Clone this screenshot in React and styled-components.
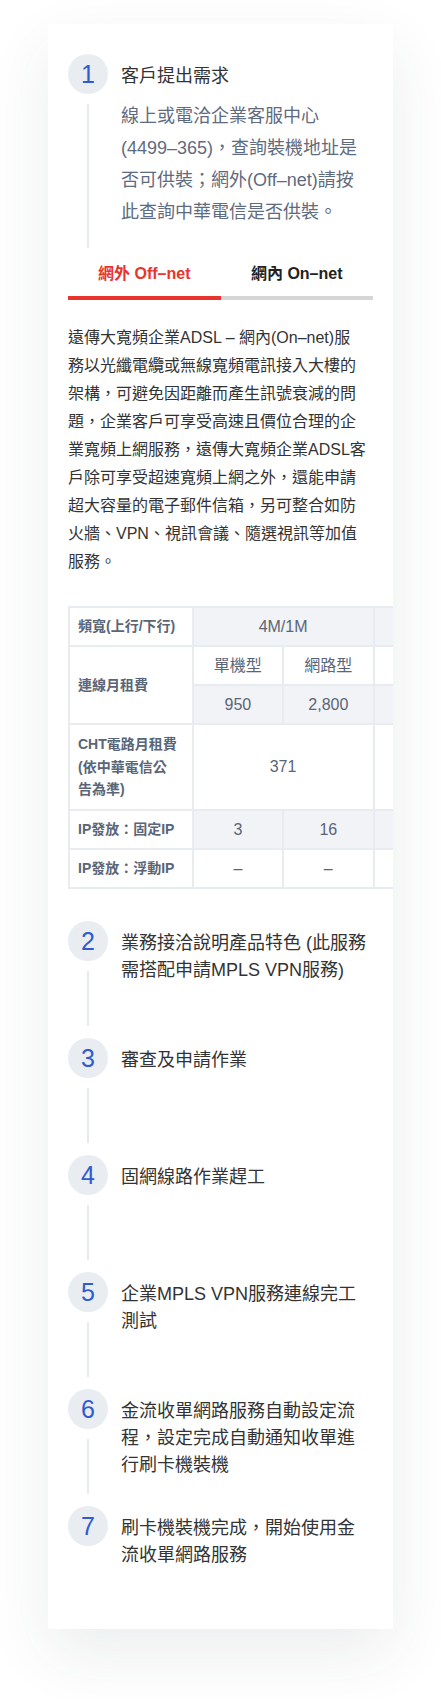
import React, { useState } from 'react';
import styled, { createGlobalStyle } from 'styled-components';

const GlobalStyle = createGlobalStyle`
  body {
    margin: 0;
    background: #ffffff;
    font-family: 'Liberation Sans', 'Noto Sans CJK TC', sans-serif;
    color: #333333;
  }
`;

const Page = styled.div`
  padding: 24px 48px 72px;
`;

const Card = styled.div`
  background: #ffffff;
  padding: 30px 20px 6px;
  box-shadow: 0 24px 60px rgba(40, 50, 70, 0.09);
  overflow: hidden;
`;

const Step = styled.div`
  display: flex;
  min-height: 117px;
`;

const Rail = styled.div`
  width: 40px;
  flex-shrink: 0;
  display: flex;
  flex-direction: column;
  align-items: center;
`;

const Circle = styled.div`
  width: 40px;
  height: 40px;
  border-radius: 50%;
  background: #e9ecf1;
  color: #2f5bd0;
  font-size: 25px;
  line-height: 40px;
  text-align: center;
  flex-shrink: 0;
`;

const Line = styled.div`
  flex: 1;
  width: 2px;
  min-height: 55px;
  margin: 10px 0 12px;
  background: #e6e9ee;
`;

const Body = styled.div`
  flex: 1;
  padding: 9px 5px 0 13px;
`;

const Title = styled.div`
  font-size: 18px;
  line-height: 27px;
  color: #333333;
`;

const Desc = styled.p`
  margin: 10px 0 32px;
  font-size: 18px;
  line-height: 32px;
  color: #5f6b7e;
`;

const Tabs = styled.div`
  display: flex;
`;

const Tab = styled.button`
  flex: 1;
  border: none;
  background: none;
  padding: 0 0 8px;
  font-family: inherit;
  font-size: 16px;
  font-weight: 700;
  line-height: 28px;
  cursor: pointer;
  color: ${props => (props.active ? '#e8342c' : '#222222')};
  border-bottom: 4px solid ${props => (props.active ? '#e8342c' : '#d6d6d6')};
`;

const Intro = styled.p`
  margin: 24px 0 30px;
  font-size: 16px;
  line-height: 28px;
  color: #333333;
`;

const TableWrap = styled.div`
  margin: 0 -20px 32px 0;
  overflow: hidden;
`;

const Table = styled.table`
  width: 397px;
  table-layout: fixed;
  border-collapse: separate;
  border-spacing: 2px;
  background: #e8ebef;
  font-size: 14px;
  color: #5a6577;
`;

const Cell = styled.td`
  height: ${props => (props.tall ? '68px' : '21px')};
  padding: 8px ${props => (props.label ? '12px' : '8px')} 8px 8px;
  line-height: ${props => (props.tall ? '22.7px' : '21px')};
  background: ${props => (props.shade ? '#f1f3f6' : '#ffffff')};
  text-align: ${props => (props.label ? 'left' : 'center')};
  font-weight: ${props => (props.label ? 600 : 400)};
  font-size: ${props => (props.label ? '14px' : '16px')};
  vertical-align: middle;
`;

const steps = [
  '業務接洽說明產品特色 (此服務需搭配申請MPLS VPN服務)',
  '審查及申請作業',
  '固網線路作業趕工',
  '企業MPLS VPN服務連線完工測試',
  '金流收單網路服務自動設定流程，設定完成自動通知收單進行刷卡機裝機',
  '刷卡機裝機完成，開始使用金流收單網路服務'
];

const introLines = [
  '遠傳大寬頻企業ADSL – 網內(On–net)服',
  '務以光纖電纜或無線寬頻電訊接入大樓的',
  '架構，可避免因距離而產生訊號衰減的問',
  '題，企業客戶可享受高速且價位合理的企',
  '業寬頻上網服務，遠傳大寬頻企業ADSL客',
  '戶除可享受超速寬頻上網之外，還能申請',
  '超大容量的電子郵件信箱，另可整合如防',
  '火牆、VPN、視訊會議、隨選視訊等加值',
  '服務。'
];

// the last column is the next speed tier, only its edge peeks out of the card
function PriceTable() {
  return (
    <TableWrap>
      <Table>
        <colgroup>
          <col style={{ width: 121 }} />
          <col style={{ width: 88 }} />
          <col style={{ width: 88 }} />
          <col style={{ width: 88 }} />
        </colgroup>
        <tbody>
          <tr>
            <Cell label>頻寬(上行/下行)</Cell>
            <Cell colSpan={2} shade>4M/1M</Cell>
            <Cell shade />
          </tr>
          <tr>
            <Cell label rowSpan={2}>連線月租費</Cell>
            <Cell>單機型</Cell>
            <Cell>網路型</Cell>
            <Cell />
          </tr>
          <tr>
            <Cell shade>950</Cell>
            <Cell shade>2,800</Cell>
            <Cell shade />
          </tr>
          <tr>
            <Cell label tall>CHT電路月租費(依中華電信公告為準)</Cell>
            <Cell colSpan={2} tall>371</Cell>
            <Cell tall />
          </tr>
          <tr>
            <Cell label>IP發放：固定IP</Cell>
            <Cell shade>3</Cell>
            <Cell shade>16</Cell>
            <Cell shade />
          </tr>
          <tr>
            <Cell label>IP發放：浮動IP</Cell>
            <Cell>–</Cell>
            <Cell>–</Cell>
            <Cell />
          </tr>
        </tbody>
      </Table>
    </TableWrap>
  );
}

export default function App() {
  const [tab, setTab] = useState('off');
  return (
    <Page>
      <GlobalStyle />
      <Card>
        <Step>
          <Rail>
            <Circle>1</Circle>
            <Line />
          </Rail>
          <Body>
            <Title>客戶提出需求</Title>
            <Desc>線上或電洽企業客服中心(4499–365)，查詢裝機地址是否可供裝；網外(Off–net)請按此查詢中華電信是否供裝。</Desc>
          </Body>
        </Step>
        <Tabs>
          <Tab active={tab === 'off'} onClick={() => setTab('off')}>網外 Off–net</Tab>
          <Tab active={tab === 'on'} onClick={() => setTab('on')}>網內 On–net</Tab>
        </Tabs>
        <Intro>
          {introLines.map((line, i) => (
            <React.Fragment key={i}>
              {line}
              {i < introLines.length - 1 && <br />}
            </React.Fragment>
          ))}
        </Intro>
        <PriceTable />
        {steps.map((text, i) => {
          const last = i === steps.length - 1;
          return (
            <Step key={i}>
              <Rail>
                <Circle>{i + 2}</Circle>
                {!last && <Line />}
              </Rail>
              <Body>
                <Title>{text}</Title>
              </Body>
            </Step>
          );
        })}
      </Card>
    </Page>
  );
}
